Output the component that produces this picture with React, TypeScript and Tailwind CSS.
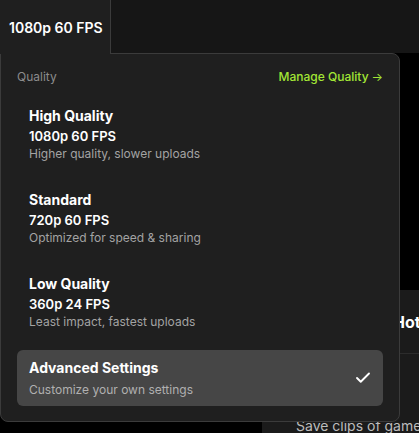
import { Check } from "lucide-react";

const options = [
  { title: "High Quality", spec: "1080p 60 FPS", desc: "Higher quality, slower uploads" },
  { title: "Standard", spec: "720p 60 FPS", desc: "Optimized for speed & sharing" },
  { title: "Low Quality", spec: "360p 24 FPS", desc: "Least impact, fastest uploads" },
];

export default function App() {
  return (
    <div
      className="relative w-[419px] h-[433px] overflow-hidden bg-black text-white"
      style={{ fontFamily: "Inter, 'Noto Sans', sans-serif" }}
    >
      {/* page behind the dropdown */}
      <div className="h-[53px] bg-[#161616]" />
      <div className="ml-[262px] mt-[237px] h-[200px] bg-[#1b1b1b] flex flex-col">
        <div className="h-[64px] pl-[131px] flex items-center text-[16px] font-bold whitespace-nowrap border-b border-[#2c2c2c]">
          Hotkeys
        </div>
        <div className="pl-[34px] pt-[61px] text-[14px] text-[#bdbdbd] whitespace-nowrap">
          Save clips of gameplay
        </div>
      </div>

      {/* trigger tab */}
      <div className="absolute left-0 top-0 z-10 w-[111px] h-[54px] bg-[#1f1f1f] border-r border-[#3b3b3b] flex items-center pl-[9px] text-[14px] font-semibold">
        1080p 60 FPS
      </div>

      {/* dropdown */}
      <div className="absolute left-0 top-[53px] w-[400px] h-[369px] bg-[#1f1f1f] border border-[#3b3b3b] rounded-tr-lg rounded-b-lg px-4 pt-[15px]">
        <div className="flex items-center justify-between h-4 text-[12px]">
          <span className="text-[#8c8c8c]">Quality</span>
          <span className="text-[#a3e635] font-medium flex items-center gap-[3px]">
            Manage Quality <span className="text-[12px] font-normal">→</span>
          </span>
        </div>
        <div className="mt-[7px] flex flex-col">
          {options.map((o) => (
            <div key={o.title} className="px-3 py-[14px]">
              <div className="text-[14px] leading-5 font-bold">{o.title}</div>
              <div className="text-[13px] leading-4 font-semibold mt-[2px]">{o.spec}</div>
              <div className="text-[12px] leading-4 text-[#a3a3a3] mt-[2px]">{o.desc}</div>
            </div>
          ))}
          <div className="mt-[6px] h-[56px] rounded-md bg-[#464646] px-3 flex items-center justify-between">
            <div>
              <div className="text-[14px] leading-5 font-bold">Advanced Settings</div>
              <div className="text-[12px] leading-4 text-[#b0b0b0] mt-1">Customize your own settings</div>
            </div>
            <Check size={18} strokeWidth={2.5} className="-mr-[1px]" />
          </div>
        </div>
      </div>
    </div>
  );
}
